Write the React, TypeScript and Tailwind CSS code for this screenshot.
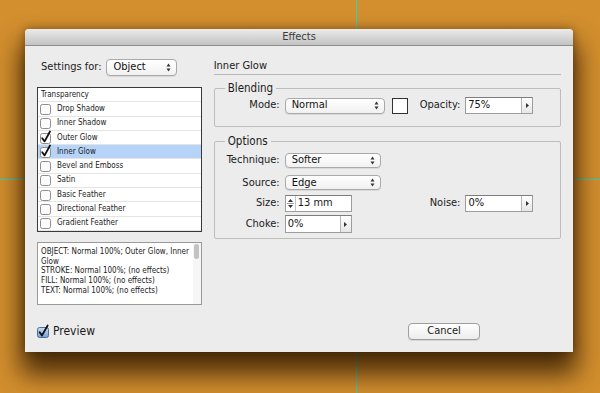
import React from "react";

function Arrows() {
  return (
    <svg width="5" height="9" viewBox="0 0 5 9" className="shrink-0">
      <path d="M2.5 0.5 L4.5 3.5 L0.5 3.5 Z" fill="#333" />
      <path d="M2.5 8.5 L4.5 5.5 L0.5 5.5 Z" fill="#333" />
    </svg>
  );
}

function Select({ value, className }: { value: string; className: string }) {
  return (
    <div
      className={`flex items-center justify-between rounded-[4px] border border-[#a9a9a9] bg-gradient-to-b from-white to-[#f1f1f1] pl-[6px] pr-[5px] text-[11px] text-[#111] shadow-[0_1px_0_rgba(0,0,0,0.08)] ${className}`}
    >
      <span>{value}</span>
      <Arrows />
    </div>
  );
}

function StepInput({ value, className }: { value: string; className: string }) {
  return (
    <div className={`flex border border-[#9d9d9d] border-t-[#7d7d7d] bg-white ${className}`}>
      <div className="flex flex-1 items-center pl-[2px] text-[11px] text-[#111]">{value}</div>
      <div className="flex w-[11px] items-center justify-center border-l border-[#b5b5b5] bg-gradient-to-b from-white to-[#e6e6e6]">
        <svg width="3" height="5" viewBox="0 0 3 5">
          <path d="M0 0 L3 2.5 L0 5 Z" fill="#333" />
        </svg>
      </div>
    </div>
  );
}

function Check({ checked }: { checked: boolean }) {
  return (
    <svg width="12" height="12" viewBox="0 0 12 12" className="shrink-0 overflow-visible">
      <rect x="0.5" y="1.5" width="10" height="10" rx="2" fill="#fbfbfb" stroke="#8d8d8d" />
      {checked && (
        <path d="M2.2 6.2 L4.6 9.4 L10 -0.5" fill="none" stroke="#111" strokeWidth="1.8" strokeLinecap="round" strokeLinejoin="round" />
      )}
    </svg>
  );
}

const effects = [
  { name: "Drop Shadow", on: false },
  { name: "Inner Shadow", on: false },
  { name: "Outer Glow", on: true },
  { name: "Inner Glow", on: true, sel: true },
  { name: "Bevel and Emboss", on: false },
  { name: "Satin", on: false },
  { name: "Basic Feather", on: false },
  { name: "Directional Feather", on: false },
  { name: "Gradient Feather", on: false },
];

export default function App() {
  return (
    <div className="relative h-[393px] w-[600px] overflow-hidden bg-[#d38f2e] font-['DejaVu_Sans_Condensed','DejaVu_Sans',sans-serif] [font-stretch:semi-condensed] text-[#1a1a1a]">
      {/* guides */}
      <div className="absolute left-[356px] top-0 h-full w-px bg-[#29d3c8]" />
      <div className="absolute left-0 top-[179px] h-px w-full bg-[#29d3c8]" />

      <div className="relative ml-[25px] mt-[29px] w-[548px] rounded-t-[4px] bg-[#ececec] shadow-[0_18px_26px_4px_rgba(40,20,0,0.8),0_0_8px_rgba(60,30,0,0.45)]">
        {/* title bar */}
        <div className="flex h-[17px] items-center justify-center rounded-t-[4px] border-b border-[#8c8c8c] bg-gradient-to-b from-[#ebebeb] to-[#c3c3c3] text-[11px] text-[#3a3a3a]">
          Effects
        </div>

        <div className="flex gap-[12px] px-[12px] pt-[13px]">
          {/* left column */}
          <div className="flex w-[165px] flex-col">
            <div className="flex h-[17px] items-center">
              <span className="ml-[4px] text-[11px]">Settings for:</span>
              <Select value="Object" className="ml-[5px] h-[17px] w-[71px] text-[11.5px]" />
            </div>

            <div className="mt-[11px] h-[145px] border border-[#3a3a3a] bg-white">
              <div className="flex h-[14.3px] items-center border-b border-[#e4e4e4] pl-[3px] text-[8px]">Transparency</div>
              {effects.map((e) => (
                <div
                  key={e.name}
                  className={`flex h-[14.3px] items-center gap-[5px] border-b border-[#e4e4e4] pl-[2px] text-[8px] ${e.sel ? "bg-[#b6d4f8]" : ""}`}
                >
                  <Check checked={e.on} />
                  <span>{e.name}</span>
                </div>
              ))}
            </div>

            <div className="relative mt-[10px] h-[63px] border border-[#9a9a9a] bg-white pl-[3px] pt-[4px] text-[8px] leading-[9.7px]">
              <div className="whitespace-nowrap">OBJECT: Normal 100%; Outer Glow, Inner</div>
              <div>Glow</div>
              <div className="whitespace-nowrap">STROKE: Normal 100%; (no effects)</div>
              <div className="whitespace-nowrap">FILL: Normal 100%; (no effects)</div>
              <div className="whitespace-nowrap">TEXT: Normal 100%; (no effects)</div>
              <div className="absolute right-0 top-0 flex h-full w-[8px] justify-center bg-[#f6f6f6] pt-[1px]">
                <div className="h-[15px] w-[5px] rounded-full bg-[#c2c2c2]" />
              </div>
            </div>
          </div>

          {/* right column */}
          <div className="flex w-[348px] flex-col">
            <div className="flex h-[16px] items-center border-b border-[#b9b9b9] text-[11px]">Inner Glow</div>

            <fieldset className="mt-[6px] h-[46px] rounded-[2px] border border-[#bdbdbd] pb-[12px] pt-[2px]">
              <legend className="ml-[10px] px-[3px] text-[11.5px] leading-[14px]">Blending</legend>
              <div className="flex items-center">
                <span className="w-[65px] text-right text-[11px]">Mode:</span>
                <Select value="Normal" className="ml-[5px] h-[16px] w-[100px]" />
                <div className="ml-[7px] h-[16px] w-[16px] border border-[#333] bg-white" />
                <span className="ml-[12px] text-[11px]">Opacity:</span>
                <StepInput value="75%" className="ml-[5px] h-[17px] w-[68px]" />
              </div>
            </fieldset>

            <fieldset className="mt-[7px] h-[105px] rounded-[2px] border border-[#bdbdbd]">
              <legend className="ml-[10px] px-[3px] text-[11.5px] leading-[14px]">Options</legend>
              <div className="mt-[4px] flex items-center">
                <span className="w-[65px] text-right text-[11px]">Technique:</span>
                <Select value="Softer" className="ml-[5px] h-[15px] w-[96px]" />
              </div>
              <div className="mt-[6px] flex items-center">
                <span className="w-[65px] text-right text-[11px]">Source:</span>
                <Select value="Edge" className="ml-[5px] h-[15px] w-[96px]" />
              </div>
              <div className="mt-[4px] flex items-center">
                <span className="w-[65px] text-right text-[11px]">Size:</span>
                <div className="ml-[5px] flex h-[17px] w-[67px] items-center border border-[#9d9d9d] border-t-[#7d7d7d] bg-white">
                  <div className="flex h-full w-[10px] flex-col items-center justify-center gap-[1px] border-r border-[#c4c4c4]">
                    <svg width="5" height="3" viewBox="0 0 5 3"><path d="M2.5 0 L5 3 L0 3 Z" fill="#333" /></svg>
                    <div className="h-px w-[7px] bg-[#9a9a9a]" />
                    <svg width="5" height="3" viewBox="0 0 5 3"><path d="M0 0 L5 0 L2.5 3 Z" fill="#333" /></svg>
                  </div>
                  <span className="pl-[2px] text-[11px]">13 mm</span>
                </div>
                <span className="ml-[78px] text-[11px]">Noise:</span>
                <StepInput value="0%" className="ml-[5px] h-[17px] w-[68px]" />
              </div>
              <div className="mt-[3px] flex items-center">
                <span className="w-[65px] text-right text-[11px]">Choke:</span>
                <StepInput value="0%" className="ml-[5px] h-[18px] w-[67px]" />
              </div>
            </fieldset>
          </div>
        </div>

        {/* bottom row */}
        <div className="flex items-center px-[12px] pb-[12px] pt-[17px]">
          <div className="flex w-[165px] items-center gap-[4px]">
            <svg width="12" height="13" viewBox="0 0 12 13" className="overflow-visible">
              <defs>
                <linearGradient id="pv" x1="0" y1="0" x2="0" y2="1">
                  <stop offset="0" stopColor="#c9def6" />
                  <stop offset="1" stopColor="#6f9fd8" />
                </linearGradient>
              </defs>
              <rect x="0.5" y="2.5" width="11" height="10" rx="2" fill="url(#pv)" stroke="#4f6f96" />
              <path d="M2.6 7.2 L5 10.4 L10.6 0.6" fill="none" stroke="#111" strokeWidth="1.9" strokeLinecap="round" strokeLinejoin="round" />
            </svg>
            <span className="text-[12px]">Preview</span>
          </div>
          <div className="ml-[206px] flex h-[17px] w-[72px] items-center justify-center rounded-[4px] border border-[#9e9e9e] bg-gradient-to-b from-white to-[#ececec] text-[11px] shadow-[0_1px_0_rgba(0,0,0,0.1)]">
            Cancel
          </div>
        </div>
      </div>
    </div>
  );
}
